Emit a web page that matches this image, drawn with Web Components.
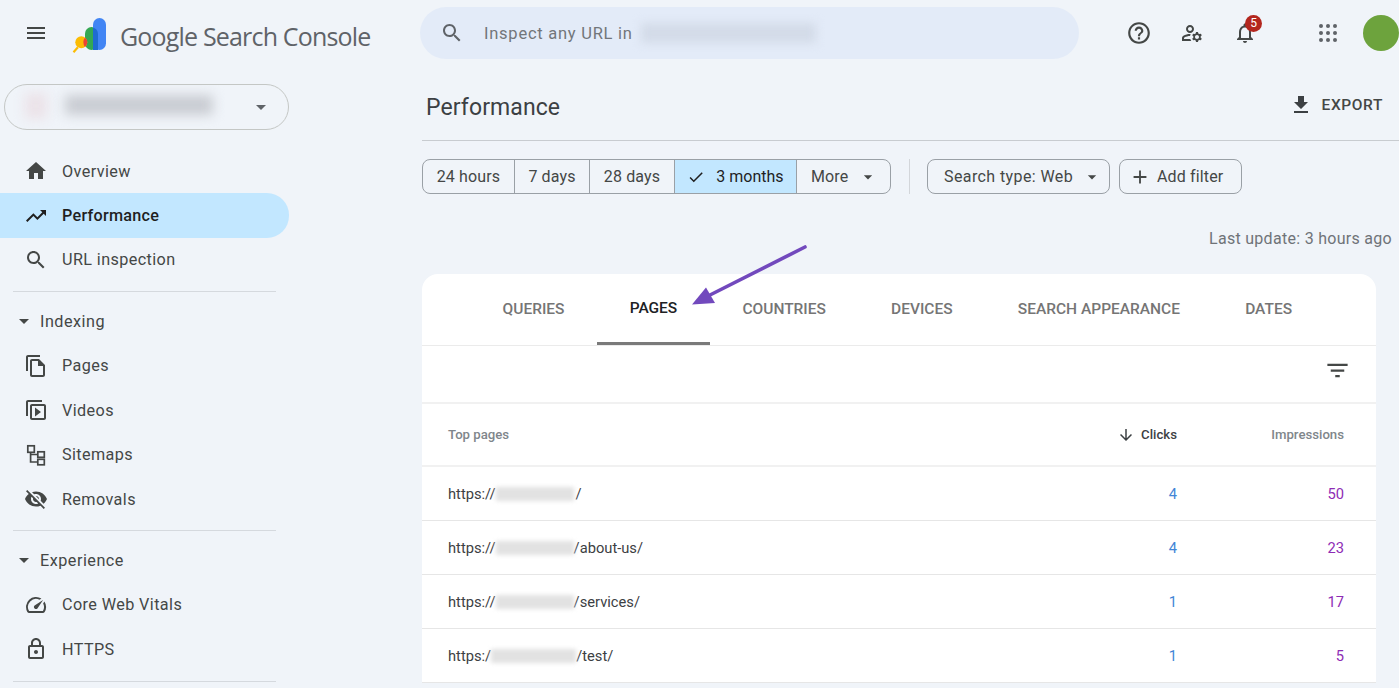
<!DOCTYPE html>
<html lang="en"><head><meta charset="utf-8"><title>Performance</title>
<style>
html,body{margin:0;height:688px;overflow:hidden;background:#f0f4f9}
body{font-family:Roboto,"Liberation Sans",sans-serif;color:#444746}
</style></head><body>
<gsc-app>
  <gsc-topbar slot="top"></gsc-topbar>
  <gsc-sidebar slot="side">
    <gsc-property></gsc-property>
    <gsc-nav icon="home">Overview</gsc-nav>
    <gsc-nav icon="trend" active>Performance</gsc-nav>
    <gsc-nav icon="search">URL inspection</gsc-nav>
    <gsc-section label="Indexing">
      <gsc-nav icon="pages">Pages</gsc-nav>
      <gsc-nav icon="videos">Videos</gsc-nav>
      <gsc-nav icon="sitemap">Sitemaps</gsc-nav>
      <gsc-nav icon="removals">Removals</gsc-nav>
    </gsc-section>
    <gsc-section label="Experience">
      <gsc-nav icon="speed">Core Web Vitals</gsc-nav>
      <gsc-nav icon="lock">HTTPS</gsc-nav>
    </gsc-section>
    <gsc-rule></gsc-rule>
  </gsc-sidebar>
  <gsc-main slot="main">
    <gsc-title></gsc-title>
    <gsc-filters></gsc-filters>
    <gsc-update></gsc-update>
    <gsc-card>
      <gsc-tabs></gsc-tabs>
      <gsc-tools></gsc-tools>
      <gsc-head></gsc-head>
      <gsc-row prefix="https://" blur="78" gap="2" suffix="/" clicks="4" imps="50"></gsc-row>
      <gsc-row prefix="https://" blur="78" gap="0" suffix="/about-us/" clicks="4" imps="23"></gsc-row>
      <gsc-row prefix="https://" blur="78" gap="0" suffix="/services/" clicks="1" imps="17"></gsc-row>
      <gsc-row prefix="https:/" blur="85" gap="0" suffix="/test/" clicks="1" imps="5"></gsc-row>
    </gsc-card>
  </gsc-main>
  <gsc-arrow slot="over"></gsc-arrow>
</gsc-app>
<script>
const P={
menu:'<path d="M3 18h18v-2H3v2zm0-5h18v-2H3v2zm0-7v2h18V6H3z"/>',
search:'<path d="M15.5 14h-.79l-.28-.27C15.41 12.59 16 11.11 16 9.5 16 5.91 13.09 3 9.5 3S3 5.91 3 9.5 5.91 16 9.5 16c1.61 0 3.09-.59 4.23-1.57l.27.28v.79l5 4.99L20.49 19l-4.99-5zm-6 0C7.01 14 5 11.99 5 9.5S7.01 5 9.5 5 14 7.01 14 9.5 11.99 14 9.5 14z"/>',
help:'<path d="M11 18h2v-2h-2v2zm1-16C6.48 2 2 6.48 2 12s4.48 10 10 10 10-4.48 10-10S17.52 2 12 2zm0 18c-4.41 0-8-3.59-8-8s3.59-8 8-8 8 3.59 8 8-3.59 8-8 8zm0-14c-2.21 0-4 1.79-4 4h2c0-1.1.9-2 2-2s2 .9 2 2c0 2-3 1.75-3 5h2c0-2.25 3-2.5 3-5 0-2.21-1.79-4-4-4z"/>',
admin:'<path d="M4 18v-.65c0-.34.16-.66.41-.81C6.1 15.53 8.03 15 10 15c.03 0 .05 0 .08.01.1-.7.3-1.37.59-1.98-.22-.02-.44-.03-.67-.03-2.42 0-4.68.67-6.61 1.82-.88.52-1.39 1.5-1.39 2.53V20h9.26c-.42-.6-.75-1.28-.97-2H4zM10 12c2.21 0 4-1.79 4-4s-1.79-4-4-4-4 1.79-4 4 1.79 4 4 4zm0-6c1.1 0 2 .9 2 2s-.9 2-2 2-2-.9-2-2 .9-2 2-2zM20.75 16c0-.22-.03-.42-.06-.63l1.14-1.01-1-1.73-1.45.49c-.32-.27-.68-.48-1.08-.63L18 11h-2l-.3 1.49c-.4.15-.76.36-1.08.63l-1.45-.49-1 1.73 1.14 1.01c-.03.21-.06.41-.06.63s.03.42.06.63l-1.14 1.01 1 1.73 1.45-.49c.32.27.68.48 1.08.63L16 21h2l.3-1.49c.4-.15.76-.36 1.08-.63l1.45.49 1-1.73-1.14-1.01c.03-.21.06-.41.06-.63zM17 18c-1.1 0-2-.9-2-2s.9-2 2-2 2 .9 2 2-.9 2-2 2z"/>',
bell:'<path d="M12 22c1.1 0 2-.9 2-2h-4c0 1.1.9 2 2 2zm6-6v-5c0-3.07-1.63-5.64-4.5-6.32V4c0-.83-.67-1.5-1.5-1.5s-1.5.67-1.5 1.5v.68C7.64 5.36 6 7.92 6 11v5l-2 2v1h16v-1l-2-2zm-2 1H8v-6c0-2.48 1.51-4.5 4-4.5s4 2.02 4 4.5v6z"/>',
apps:[4,11,18].map(y=>[4,11,18].map(x=>`<circle cx="${x+1}" cy="${y+1}" r="2"/>`).join('')).join(''),
home:'<path d="M10 20v-6h4v6h5v-8h3L12 3 2 12h3v8z"/>',
trend:'<path d="M16 6l2.29 2.29-4.88 4.88-4-4L2 16.59 3.41 18l6-6 4 4 6.3-6.29L22 12V6z"/>',
pages:'<path d="M16 1H4c-1.1 0-2 .9-2 2v14h2V3h12V1zm-1 4H8c-1.1 0-1.99.9-1.99 2L6 21c0 1.1.89 2 1.99 2H19c1.1 0 2-.9 2-2V11l-6-6zM8 21V7h6v5h5v9H8z"/>',
videos:'<path fill-rule="evenodd" d="M4 18H2V4c0-1.1.9-2 2-2h14v2H4v14zM8 6h12c1.1 0 2 .9 2 2v12c0 1.1-.9 2-2 2H8c-1.1 0-2-.9-2-2V8c0-1.1.9-2 2-2zm0 2v12h12V8H8zm3 1.5v9l6-4.5z"/>',
sitemap:'<g fill="none" stroke="currentColor" stroke-width="1.7"><rect x="3.800" y="2.800" width="6.500" height="6.500"/><rect x="13.800" y="8.800" width="6.500" height="5.500"/><rect x="13.800" y="16.300" width="6.500" height="5.500"/><path d="M6.600 9.300V19h7.200M6.600 11.500h7.200"/></g>',
removals:'<path d="M12 7c2.76 0 5 2.24 5 5 0 .65-.13 1.26-.36 1.83l2.92 2.92c1.51-1.26 2.7-2.89 3.43-4.75-1.73-4.39-6-7.5-11-7.5-1.4 0-2.74.25-3.98.7l2.16 2.16C10.74 7.13 11.35 7 12 7zM2 4.27l2.28 2.28.46.46C3.08 8.3 1.78 10.02 1 12c1.73 4.39 6 7.5 11 7.5 1.55 0 3.03-.3 4.38-.84l.42.42L19.73 22 21 20.73 3.27 3 2 4.27zM7.53 9.8l1.55 1.55c-.05.21-.08.43-.08.65 0 1.66 1.34 3 3 3 .22 0 .44-.03.65-.08l1.55 1.55c-.67.33-1.41.53-2.2.53-2.76 0-5-2.24-5-5 0-.79.2-1.53.53-2.2zm4.31-.78l3.15 3.15.02-.16c0-1.66-1.34-3-3-3l-.17.01z"/>',
speed:'<path d="M20.38 8.57l-1.23 1.85a8 8 0 0 1-.22 7.58H5.07A8 8 0 0 1 15.58 6.85l1.85-1.23A10 10 0 0 0 3.35 19a2 2 0 0 0 1.72 1h13.85a2 2 0 0 0 1.74-1 10 10 0 0 0-.27-10.44zm-9.79 6.84a2 2 0 0 0 2.83 0l5.66-8.49-8.49 5.66a2 2 0 0 0 0 2.83z"/>',
lock:'<path d="M18 8h-1V6c0-2.76-2.24-5-5-5S7 3.24 7 6v2H6c-1.1 0-2 .9-2 2v10c0 1.1.9 2 2 2h12c1.1 0 2-.9 2-2V10c0-1.1-.9-2-2-2zM9 6c0-1.66 1.34-3 3-3s3 1.34 3 3v2H9V6zm9 14H6V10h12v10zm-6-3c1.1 0 2-.9 2-2s-.9-2-2-2-2 .9-2 2 .9 2 2 2z"/>',
download:'<path d="M19 9h-4V3H9v6H5l7 7 7-7zM5 18v2h14v-2H5z"/>',
check:'<path d="M9 16.17L4.83 12l-1.42 1.41L9 19 21 7l-1.41-1.41z"/>',
add:'<path d="M19 13h-6v6h-2v-6H5v-2h6V5h2v6h6v2z"/>',
filter:'<path d="M10 18h4v-2h-4v2zM3 6v2h18V6H3zm3 7h12v-2H6v2z"/>',
down:'<path d="M20 12l-1.41-1.41L13 16.17V4h-2v12.17l-5.58-5.59L4 12l8 8 8-8z"/>',
caret:'<path d="M7 10l5 5 5-5z"/>'
};
const ico=(n,s=24,c='currentColor',extra='')=>`<svg width="${s}" height="${s}" viewBox="0 0 24 24" fill="${c}" style="display:block;flex:none;color:${c};${extra}">${P[n]}</svg>`;
function def(name,html){
  customElements.define(name,class extends HTMLElement{
    constructor(){super();this.attachShadow({mode:'open'})}
    connectedCallback(){this.shadowRoot.innerHTML=typeof html==='function'?html(this):html}
  });
}
def('gsc-app',`<style>
:host{display:grid;grid-template-columns:289px 1fr;grid-template-rows:66px 622px;width:1399px;height:688px;overflow:hidden;position:relative}
.top{grid-column:1/3}
</style><div class="top"><slot name="top"></slot></div><slot name="side"></slot><slot name="main"></slot><slot name="over"></slot>`);

def('gsc-topbar',`<style>
:host{display:flex;height:66px;align-items:flex-start;color:#444746}
.menu{margin:21px 0 0 24px}
.logo{margin:17px 0 0 24px;flex:none}
.brand{font:25px/1 "Open Sans",Roboto,sans-serif;letter-spacing:-.82px;color:#5f6368;margin:24px 0 0 12px;width:250px;white-space:nowrap}
.search{margin:7px 0 0 50px;width:659px;height:52px;border-radius:26px;background:#e3ebf8;display:flex;align-items:center;box-sizing:border-box;padding-left:20px;color:#5f6368;flex:none}
.search span{margin-left:20px;font-size:16.5px;letter-spacing:.75px;color:#72767a;white-space:nowrap}
.blur{width:175px;height:20px;margin-left:8px;background:#d3dbe8;filter:blur(5px)}
.right{margin-left:48px;flex:1;height:66px;position:relative}
.ic{position:absolute;top:21px}
.badge{position:absolute;left:118px;top:15px;width:17px;height:17px;border-radius:50%;background:#b3261e;color:#fff;font-size:12px;line-height:17px;text-align:center}
.av{position:absolute;right:0;top:15px;width:36px;height:36px;border-radius:50%;background:#6da33d}
</style>
<div class="menu">${ico('menu')}</div>
<svg class="logo" width="36" height="36" viewBox="0 0 36 36" aria-hidden="true">
<rect x="13" y="10" width="13" height="23" rx="6.5" fill="#34a853"/>
<rect x="21" y="1" width="13" height="32" rx="6.5" fill="#4285f4"/>
<path d="M21 33V10.600c3 .8 5 3.200 5 6.400v16z" fill="#1f6bd0"/>
<path d="M1.500 35.200l4.400-5" stroke="#fbbc04" stroke-width="2.200" fill="none"/>
<circle cx="9.300" cy="25.300" r="6" fill="#fbbc04"/>
<path d="M13 20.600a6 6 0 0 1 0 9.400 8 8 0 0 1 0-9.400z" fill="#ea4335"/>
</svg>
<div class="brand">Google Search Console</div>
<div class="search">${ico('search',24,'#5f6368')}<span>Inspect any URL in</span><div class="blur"></div></div>
<div class="right">
<div class="ic" style="left:-1px;top:20px">${ico('help',26,'#444746')}</div>
<div class="ic" style="left:53px">${ico('admin',24,'#444746')}</div>
<div class="ic" style="left:106px">${ico('bell',24,'#444746')}</div>
<div class="badge">5</div>
<div class="ic" style="left:189px">${ico('apps',24,'#5f6368')}</div>
<div class="av"></div>
</div>`);

def('gsc-sidebar',`<style>
:host{display:block;width:289px}
</style><slot></slot>`);

def('gsc-property',`<style>
:host{display:flex;align-items:center;box-sizing:border-box;margin:18px 0 19px 4px;width:285px;height:46px;border:1px solid #c4c7c5;border-radius:23px;position:relative;overflow:hidden}
.a{position:absolute;left:20px;top:8px;width:22px;height:26px;background:#ebe2e8;filter:blur(6px)}
.b{position:absolute;left:60px;top:10px;width:148px;height:20px;background:#c9ccd2;filter:blur(6px)}
.c{position:absolute;right:15px;top:10px;color:#5f6368}
</style><div class="a"></div><div class="b"></div><div class="c">${ico('caret',24,'#5f6368')}</div>`);

def('gsc-nav',el=>`<style>
:host{display:flex;align-items:center;height:44.4px;width:289px;box-sizing:border-box;padding-left:24px;border-radius:0 22px 22px 0;font-size:16.2px;letter-spacing:.4px;color:#444746}
:host([active]){background:#c2e7ff;color:#1f1f1f;font-weight:500;letter-spacing:.25px}
span{margin-left:14px;white-space:nowrap}
</style>${ico(el.getAttribute('icon'),24,el.hasAttribute('active')?'#1f1f1f':'#444746')}<span><slot></slot></span>`);

def('gsc-rule',`<style>
:host{display:block;height:1px;background:#d5d9de;margin:9px 13px 0 13px;width:263px}
</style>`);

def('gsc-section',el=>`<style>
:host{display:block}
.lab{display:flex;align-items:center;padding-left:12px;font-size:16.2px;letter-spacing:.5px;color:#444746;height:50px;margin-top:4px}
.lab span{margin-left:4px}
.items{margin-top:-2.5px}
</style><gsc-rule></gsc-rule><div class="lab">${ico('caret',24,'#444746')}<span>${el.getAttribute('label')}</span></div><div class="items"><slot></slot></div>`);

def('gsc-main',`<style>
:host{display:block;margin-left:133px;width:977px;position:relative}
</style><slot></slot>`);

def('gsc-title',`<style>
:host{display:flex;align-items:center;height:75px;box-sizing:border-box;border-bottom:1px solid #c8ccd0;padding:8px 16px 0 4px;justify-content:space-between}
h1{font:400 23px/1 Roboto,sans-serif;color:#3c4043;margin:0;letter-spacing:.1px}
.e{display:flex;align-items:center;gap:9px;font-weight:500;font-size:15.5px;letter-spacing:.6px;color:#444746;margin:-5px 0 0 0}
</style><h1>Performance</h1><div class="e">${ico('download',24,'#3c4043','margin-left:-1px')}<span>EXPORT</span></div>`);

def('gsc-filters',`<style>
:host{display:flex;margin-top:18px;height:35px;font-size:16px;letter-spacing:.14px;color:#444746}
.g{display:flex;box-sizing:border-box;height:35px;border:1px solid #9aa0a6;border-radius:8px;overflow:hidden;width:469px}
.s{display:flex;align-items:center;justify-content:center;box-sizing:border-box;border-right:1px solid #9aa0a6;flex:none;height:100%;white-space:nowrap}
.s:last-child{border-right:0}
.on{background:#c2e7ff;color:#1f1f1f;letter-spacing:0}
.sep{width:1px;height:35px;background:#d3d6da;margin:0 17px 0 18px}
.b{display:flex;align-items:center;box-sizing:border-box;height:35px;border:1px solid #9aa0a6;border-radius:8px;white-space:nowrap}
</style>
<div class="g">
<div class="s" style="width:92px">24 hours</div>
<div class="s" style="width:75px">7 days</div>
<div class="s" style="width:85px">28 days</div>
<div class="s on" style="width:122px">${ico('check',18,'#1f1f1f','margin-right:11px')}3 months</div>
<div class="s" style="flex:1;padding-left:14px;justify-content:flex-start">More${ico('caret',20,'#444746','margin-left:10px')}</div>
</div>
<div class="sep"></div>
<div class="b" style="width:183px;padding-left:16px;letter-spacing:.4px">Search type: Web${ico('caret',20,'#444746','margin-left:9px')}</div>
<div class="b" style="width:123px;padding-left:9px;margin-left:9px">${ico('add',22,'#444746','margin-right:6px')}Add filter</div>`);

def('gsc-update',`<style>
:host{display:block;height:80px;box-sizing:border-box;padding:36px 7px 0 0;text-align:right;font-size:16px;letter-spacing:.29px;color:#6f7378;line-height:18px}
</style>Last update: 3 hours ago`);

def('gsc-card',`<style>
:host{display:block;width:954px;background:#fff;border-radius:16px 16px 0 0;overflow:hidden}
</style><slot></slot>`);

def('gsc-tabs',`<style>
:host{display:flex;height:72px;box-sizing:border-box;border-bottom:1px solid #ebebeb;padding-left:48px;font-size:15.5px;font-weight:500;color:#757575}
div{display:flex;align-items:center;height:71px;padding:0 32.6px 2px;white-space:nowrap;box-sizing:border-box}
.on{color:#202124;border-bottom:3px solid #7a7a7a;padding-bottom:0;padding-top:0}
</style><div>QUERIES</div><div class="on">PAGES</div><div>COUNTRIES</div><div>DEVICES</div><div>SEARCH APPEARANCE</div><div>DATES</div>`);

def('gsc-tools',`<style>
:host{display:flex;align-items:center;justify-content:flex-end;height:58px;box-sizing:border-box;border-bottom:2px solid #f1f1f1;padding:0 25.5px 7px 0}
</style>${ico('filter',27,'#444746')}`);

def('gsc-head',`<style>
:host{display:flex;align-items:center;height:63px;box-sizing:border-box;border-bottom:2px solid #f1f1f1;padding:0 32px 0 26px;font-size:13.2px;font-weight:500;color:#80868b}
.t{flex:1}
.c{display:flex;align-items:center;color:#3c4043;width:150px;justify-content:flex-end}
.i{width:167px;text-align:right}
</style><div class="t">Top pages</div><div class="c">${ico('down',18,'#3c4043','margin-right:6px')}Clicks</div><div class="i">Impressions</div>`);

def('gsc-row',el=>`<style>
:host{display:flex;align-items:center;height:54px;box-sizing:border-box;border-bottom:1px solid #e6e6e6;padding:0 32px 0 26px;font-size:14.7px;color:#3c4043}
.t{flex:1;display:flex;align-items:center;white-space:nowrap}
.bl{width:${el.getAttribute('blur')}px;height:14px;background:#e2e2e2;filter:blur(2px);margin-right:${el.getAttribute('gap')}px}
.c{color:#4285d6;width:150px;text-align:right}
.i{color:#8e2cb5;width:167px;text-align:right}
</style><div class="t">${el.getAttribute('prefix')}<span class="bl"></span>${el.getAttribute('suffix')}</div><div class="c">${el.getAttribute('clicks')}</div><div class="i">${el.getAttribute('imps')}</div>`);

def('gsc-arrow',`<style>
:host{position:absolute;left:680px;top:240px;width:135px;height:75px;display:block;pointer-events:none}
</style><svg width="135" height="75" viewBox="680 240 135 75" aria-hidden="true"><path d="M805 247L708 296" stroke="#7249bd" stroke-width="3.600" stroke-linecap="round" fill="none"/><path d="M692 304.500L706 287.500 715 303z" fill="#7249bd"/></svg>`);
</script>
</body></html>
